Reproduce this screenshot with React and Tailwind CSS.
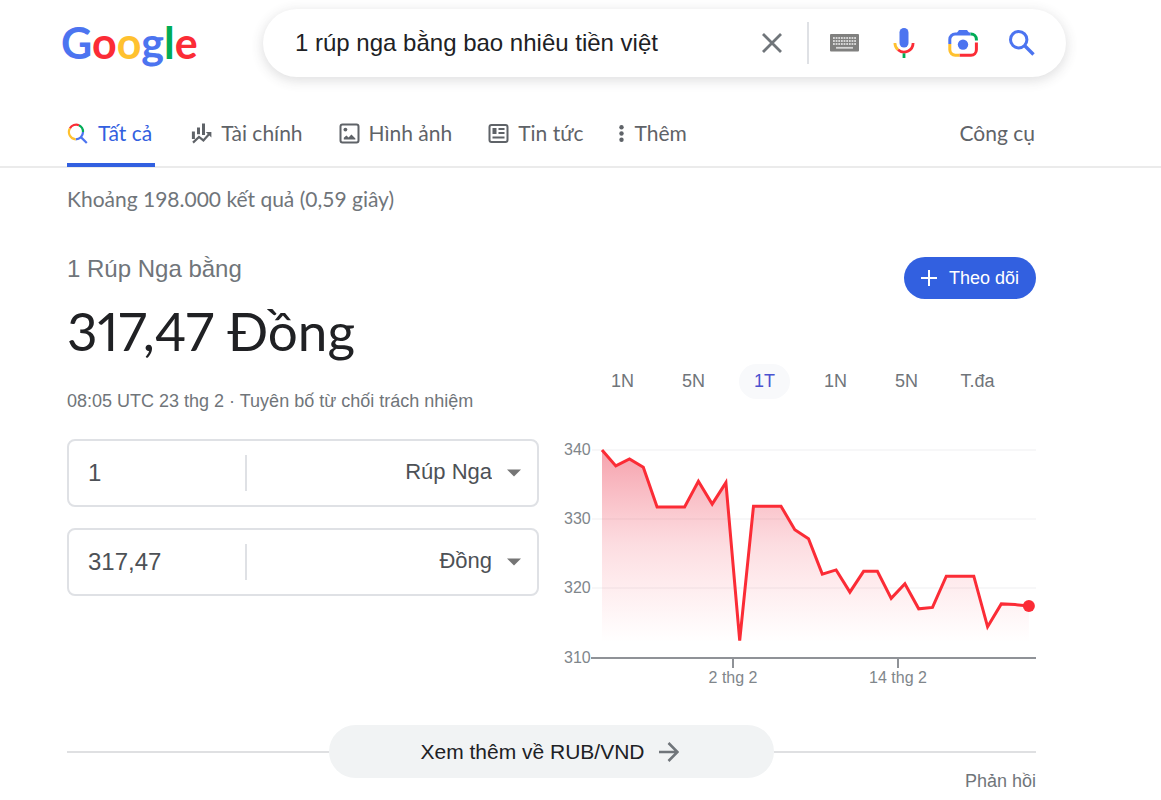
import React, { useState } from 'react';

const tabs = [
  { name: 'Tài chính', icon: FinanceIcon },
  { name: 'Hình ảnh', icon: ImageIcon },
  { name: 'Tin tức', icon: NewsIcon },
];

const ranges = [
  { id: 'day', label: '1N' },
  { id: 'week', label: '5N' },
  { id: 'month', label: '1T' },
  { id: 'year', label: '1N' },
  { id: 'fiveYears', label: '5N' },
  { id: 'max', label: 'T.đa' },
];

const rates = [
  340, 337.7, 338.7, 337.5, 331.8, 331.8, 331.8, 335.5, 332.2, 335.3, 312.5,
  331.9, 331.9, 331.9, 328.5, 327.2, 322.1, 322.7, 319.5, 322.5, 322.5, 318.6,
  320.7, 317.1, 317.3, 321.8, 321.8, 321.8, 314.5, 317.8, 317.7, 317.5,
];

function SearchTabIcon() {
  return (
    <svg viewBox="0 0 21 21" className="w-[21px] h-[21px]" fill="none" strokeWidth="2.2">
      <path d="M2.9 5.4 A7.3 7.3 0 0 1 12 2.2" stroke="#fb2c36" />
      <path d="M12 2.2 A7.3 7.3 0 0 1 16 9" stroke="#00ac56" />
      <path d="M16 9 A7.3 7.3 0 0 1 8.7 16.3" stroke="#4c74f0" />
      <path d="M8.7 16.3 A7.3 7.3 0 0 1 2.9 5.4" stroke="#ffc12f" />
      <path d="M13.4 13.6 L19.8 20" stroke="#4c74f0" />
    </svg>
  );
}

function FinanceIcon() {
  return (
    <svg viewBox="0 0 21 21" className="w-[21px] h-[21px]" fill="none" stroke="#5f6368">
      <path d="M2.4 8.5v7.6M7.5 4.5v6.8M12.5 0.5v11.5" strokeWidth="3" />
      <path d="M2 19.6 L8 14 L12.4 17.4 L18 11.2" strokeWidth="2.2" />
      <path d="M14.8 9h5.6v5.6z" fill="#5f6368" stroke="none" />
    </svg>
  );
}

function ImageIcon() {
  return (
    <svg viewBox="0 0 21 21" className="w-[21px] h-[21px]" fill="none">
      <rect x="1.5" y="1.5" width="18" height="18" rx="2" stroke="#5f6368" strokeWidth="2" />
      <circle cx="6.4" cy="6.6" r="1.9" fill="#5f6368" />
      <path d="M4.8 16.4 V14.8 L7.4 12.6 L9.6 14.6 L12.4 11.6 L16.4 15.4 V16.4 Z" fill="#5f6368" />
    </svg>
  );
}

function NewsIcon() {
  return (
    <svg viewBox="0 0 21 21" className="w-[21px] h-[21px]" fill="none" stroke="#5f6368">
      <rect x="1.5" y="2" width="18" height="17" rx="2" strokeWidth="2" />
      <rect x="4.5" y="5" width="4" height="6" fill="#5f6368" stroke="none" />
      <path d="M10.5 6h6M10.5 10h6M4.5 14.5h12" strokeWidth="2" />
    </svg>
  );
}

function KeyboardIcon() {
  return (
    <svg viewBox="0 0 29 18" className="w-[29px] h-[18px]">
      <rect width="29" height="17.5" rx="1" fill="#80807f" />
      <path d="M3 4h23M3 7h23M3 10h23" stroke="#d6d6d6" strokeWidth="1.8" strokeDasharray="1.8 0.85" />
      <path d="M6 13.8h17" stroke="#d6d6d6" strokeWidth="1.8" />
    </svg>
  );
}

function MicIcon() {
  return (
    <svg viewBox="0 0 22 30" className="w-[22px] h-[30px]" fill="none" strokeWidth="2.8">
      <rect x="6.5" y="0" width="9" height="19.5" rx="4.5" fill="#4c74f0" />
      <path d="M1.9 15 A9.1 9.1 0 0 0 5 21.8" stroke="#ffc12f" />
      <path d="M5 21.8 A9.1 9.1 0 0 0 20.1 15" stroke="#fb2c36" />
      <path d="M11 25.3v4.7" stroke="#00ac56" />
    </svg>
  );
}

function LensIcon() {
  return (
    <svg viewBox="0 0 30 28" className="w-[30px] h-[28px]" fill="none" strokeWidth="3">
      <path d="M1.8 15 V10.4 A5.4 5.4 0 0 1 7.2 5 H22.5" stroke="#4c74f0" />
      <path d="M8 5 L11 1 H19 L22 5 Z" fill="#4c74f0" />
      <path d="M22.5 5 H23 A5.4 5.4 0 0 1 28.4 10.4 V11.5" stroke="#00ac56" />
      <path d="M28.4 13.5 V20.8 A5.4 5.4 0 0 1 23 26.2 H11.5" stroke="#fb2c36" />
      <path d="M1.8 15 V20.8 A5.4 5.4 0 0 0 7.2 26.2 H11.5" stroke="#ffc12f" />
      <circle cx="15" cy="15.6" r="5.2" fill="#4c74f0" />
    </svg>
  );
}

function SearchIcon() {
  return (
    <svg viewBox="0 0 26 26" className="w-[26px] h-[26px]" fill="none" stroke="#4c74f0" strokeWidth="3">
      <circle cx="9.7" cy="9.7" r="8.2" />
      <path d="M15.5 15.5 L24.5 24.5" strokeWidth="3.4" />
    </svg>
  );
}

const RateChart = () => {
  const points = rates.map((rate, index) => [38 + index * 13.77, 20 + (340 - rate) * 6.933]);
  const line = points.map(([x, y]) => `${x.toFixed(1)},${y.toFixed(1)}`).join(' ');
  const [lastX, lastY] = points[points.length - 1];

  return (
    <svg viewBox="0 0 472 260" className="w-full" role="img" aria-label="RUB/VND">
      <defs>
        <linearGradient id="area" x1="0" y1="20" x2="0" y2="212" gradientUnits="userSpaceOnUse">
          <stop offset="0" stopColor="#e8213b" stopOpacity="0.42" />
          <stop offset="0.5" stopColor="#f0384f" stopOpacity="0.17" />
          <stop offset="1" stopColor="#ff5060" stopOpacity="0" />
        </linearGradient>
      </defs>
      <path d="M28 20H472M28 89H472M28 158H472" stroke="#f7f7f8" strokeWidth="2" />
      <polygon points={`38,212 ${line} ${lastX},212`} fill="url(#area)" />
      <path d="M27 228H472M169 228v10M334 228v10" stroke="#8f9297" strokeWidth="2" fill="none" />
      <polyline points={line} fill="none" stroke="#fb2c36" strokeWidth="3" />
      <circle cx={lastX} cy={lastY} r="6" fill="#fb2c36" />
      <g fill="#80868b" fontSize="16" fontFamily="Liberation Sans, sans-serif">
        <text x="0" y="25">340</text>
        <text x="0" y="94">330</text>
        <text x="0" y="163">320</text>
        <text x="0" y="233">310</text>
        <text x="169" y="253" textAnchor="middle">2 thg 2</text>
        <text x="334" y="253" textAnchor="middle">14 thg 2</text>
      </g>
    </svg>
  );
};

const CurrencyRow = ({ id, amount, currency }) => {
  return (
    <div className="flex items-center h-[68px] border-2 border-[#dfe1e5] rounded-lg text-[#4d5156]">
      <input
        id={`${id}-amount`}
        aria-label={`Số tiền ${currency}`}
        defaultValue={amount}
        className="w-[176px] pl-[19px] text-2xl outline-none"
      />
      <div className="w-0.5 h-9 bg-[#dfe1e5]"></div>
      <div className="relative flex-1 flex items-center">
        <select
          aria-label="Đơn vị tiền tệ"
          defaultValue={currency}
          className="w-full appearance-none pr-[45px] pb-1 text-right text-[22px] outline-none bg-transparent [text-align-last:right]"
        >
          <option>Rúp Nga</option>
          <option>Đồng</option>
        </select>
        <svg viewBox="0 0 14 8" className="absolute right-4 w-[14px] h-[8px] pointer-events-none">
          <path d="M0 0.5h14L7 7.5z" fill="#757575" />
        </svg>
      </div>
    </div>
  );
};

const App = () => {
  const [range, setRange] = useState('month');

  return (
    <div className="bg-white font-['Liberation_Sans',sans-serif] text-[#70757a]">

      {/** Search bar **/}
      <header className="flex items-center pt-[9px] pl-[61px] pr-[95px]">
        <a href="#home" className="w-[202px] shrink-0 font-['Lato',sans-serif] text-[43px] leading-[68px] font-bold">
          <span className="text-[#4c74f0]">G</span>
          <span className="text-[#fb2c36]">o</span>
          <span className="text-[#ffc12f]">o</span>
          <span className="text-[#4c74f0]">g</span>
          <span className="text-[#00ac56]">l</span>
          <span className="text-[#fb2c36]">e</span>
        </a>
        <form className="flex flex-1 items-center h-[68px] pl-8 pr-[15px] rounded-full bg-white shadow-[0_3px_12px_1px_rgba(64,60,67,0.16)]">
          <input
            type="text"
            aria-label="Tìm kiếm"
            defaultValue="1 rúp nga bằng bao nhiêu tiền việt"
            className="flex-1 min-w-0 text-2xl text-[#202124] outline-none"
          />
          <button type="button" aria-label="Xóa" className="flex justify-center w-[59px]">
            <svg viewBox="0 0 20 20" className="w-5 h-5" stroke="#70757a" strokeWidth="2.8">
              <path d="M1 1L19 19M19 1L1 19" />
            </svg>
          </button>
          <div className="w-0.5 h-[42px] mx-1.5 bg-[#dfe1e5]"></div>
          <button type="button" aria-label="Bàn phím" className="flex justify-center w-[59px]"><KeyboardIcon /></button>
          <button type="button" aria-label="Giọng nói" className="flex justify-center w-[59px]"><MicIcon /></button>
          <button type="button" aria-label="Hình ảnh" className="flex justify-center w-[59px]"><LensIcon /></button>
          <button type="button" aria-label="Tìm" className="flex justify-center w-[59px]"><SearchIcon /></button>
        </form>
      </header>

      {/** Result type tabs **/}
      <nav className="flex items-start h-[91px] pt-[41px] pl-[67px] pr-[126px] border-b-2 border-[#ebebeb] font-['Lato',sans-serif] text-[21px] leading-[30px] text-[#5f6368]">
        <a href="#all" className="flex items-center gap-[10px] h-[49px] pb-[15px] pr-[3px] border-b-4 border-[#3260e0] text-[#3260e0]">
          <SearchTabIcon />
          Tất cả
        </a>
        {tabs.map((tab) => (
          <a key={tab.name} href="#tab" className="flex items-center gap-[9px] ml-9">
            <tab.icon />
            {tab.name}
          </a>
        ))}
        <button type="button" className="flex items-center gap-[10px] ml-9">
          <svg viewBox="0 0 5 17" className="w-[5px] h-[17px]" fill="#5f6368">
            <circle cx="2.5" cy="2.2" r="2.2" />
            <circle cx="2.5" cy="8.5" r="2.2" />
            <circle cx="2.5" cy="14.8" r="2.2" />
          </svg>
          Thêm
        </button>
        <button type="button" className="ml-auto">Công cụ</button>
      </nav>

      <main className="pl-[67px] pr-[125px]">
        <p className="pt-4 font-['Lato',sans-serif] text-[21px] leading-[30px]">Khoảng 198.000 kết quả (0,59 giây)</p>

        {/** Converter and chart **/}
        <section className="grid grid-cols-2 gap-[25px] pt-[39px]">
          <div>
            <h2 className="text-2xl leading-[32px]">1 Rúp Nga bằng</h2>
            <p className="pt-4 font-['Lato',sans-serif] proportional-nums text-[53px] leading-[60px] text-[#202124]">317,47 Đồng</p>
            <p className="pt-[26px] text-[18px] leading-[28px]">
              08:05 UTC 23 thg 2 · <a href="#disclaimer">Tuyên bố từ chối trách nhiệm</a>
            </p>
            <div className="flex flex-col gap-[21px] pt-6">
              <CurrencyRow id="from" amount="1" currency="Rúp Nga" />
              <CurrencyRow id="to" amount="317,47" currency="Đồng" />
            </div>
          </div>

          <div>
            <div className="flex justify-end pt-[4px]">
              <button type="button" className="flex items-center gap-3 h-[42px] px-[17px] rounded-full bg-[#3260e0] text-white text-[18px]">
                <svg viewBox="0 0 16 16" className="w-4 h-4" stroke="white" strokeWidth="2">
                  <path d="M8 0v16M0 8h16" />
                </svg>
                Theo dõi
              </button>
            </div>
            <div className="flex gap-5 pt-[65px] pl-[33px] pb-[31px]">
              {ranges.map((item) => (
                <button
                  key={item.id}
                  type="button"
                  onClick={() => setRange(item.id)}
                  className={range === item.id
                    ? 'w-[51px] h-[35px] rounded-full text-[18px] bg-[#f8f9fb] text-[#4a52d0]'
                    : 'w-[51px] h-[35px] rounded-full text-[18px]'}
                >
                  {item.label}
                </button>
              ))}
            </div>
            <RateChart />
          </div>
        </section>

        {/** More link **/}
        <div className="flex items-center pt-[35px]">
          <div className="flex-1 h-0.5 bg-[#dfe0e2]"></div>
          <a href="#more" className="flex items-center justify-center gap-[14px] w-[445px] h-[53px] pr-1 rounded-full bg-[#f1f3f4] text-[21px] text-[#202124]">
            Xem thêm về RUB/VND
            <svg viewBox="0 0 20 20" className="w-5 h-5" fill="none" stroke="#70757a" strokeWidth="2.6">
              <path d="M0 10h18M9.5 1l9 9l-9 9" />
            </svg>
          </a>
          <div className="flex-1 h-0.5 bg-[#dfe0e2]"></div>
        </div>
        <div className="flex justify-end -mt-2">
          <a href="#feedback" className="text-[18px] leading-[22px]">Phản hồi</a>
        </div>
      </main>
    </div>
  );
};

export default App;
